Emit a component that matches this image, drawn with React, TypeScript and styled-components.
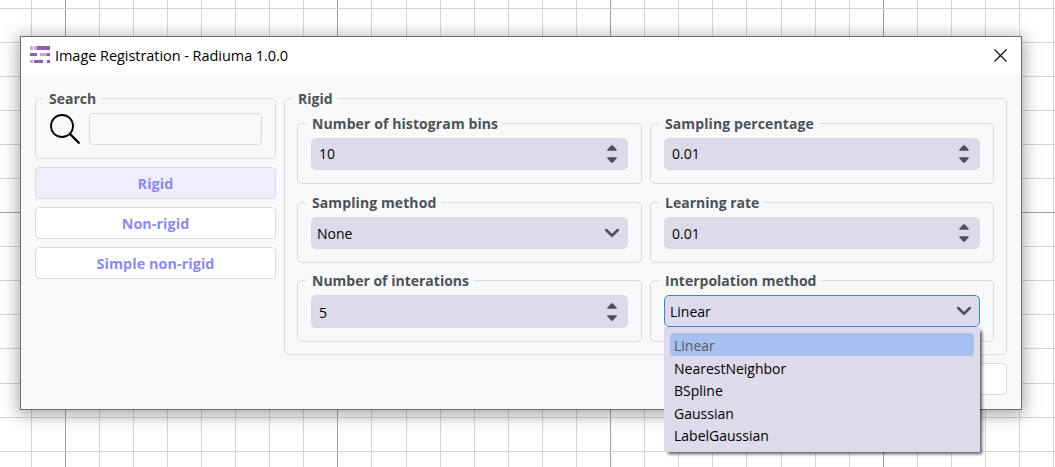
import React from "react";
import styled, { createGlobalStyle, css } from "styled-components";

const GlobalStyle = createGlobalStyle`
  *, *::before, *::after { box-sizing: border-box; }
  html, body { margin: 0; height: 100%; overflow: hidden; background: #fff; }
  body { font-family: "Open Sans", "Noto Sans", sans-serif; font-size: 14px; color: #000; }
`;

const Desktop = styled.main`
  position: relative;
  width: 1055px;
  height: 467px;
  padding: 36px 33px 57px 20px;
  overflow: hidden;
`;

const GridSvg = styled.svg`
  position: absolute;
  inset: 0;
`;

const Dialog = styled.section`
  position: relative;
  display: flex;
  flex-direction: column;
  width: 1002px;
  height: 374px;
  border: 1px solid #6b6d70;
  background: #f8f9fb;
  box-shadow: 0 3px 16px 2px rgba(0, 0, 0, 0.34);
`;

const TitleBar = styled.header`
  display: flex;
  align-items: center;
  height: 37px;
  padding: 0 14px 0 9px;
  background: #fff;
`;

const Title = styled.h1`
  flex: 1;
  margin: 0 0 0 5px;
  font-size: 14.5px;
  font-weight: 400;
  line-height: 20px;
  letter-spacing: -0.05px;
`;

const Body = styled.div`
  display: flex;
  gap: 8px;
  padding: 16px 14px 0;
`;

const Sidebar = styled.nav`
  display: flex;
  flex-direction: column;
  gap: 8px;
  width: 241px;
`;

const Main = styled.div`
  display: flex;
  flex-direction: column;
  flex: 1;
  gap: 8px;
  min-width: 0;
`;

const Group = styled.fieldset<{ $height: number; $pad?: number }>`
  min-width: 0;
  height: ${(p) => p.$height}px;
  margin: 0;
  padding: 0 ${(p) => p.$pad ?? 13}px;
  border: 1px solid #dadbde;
  border-radius: 5px;
`;

const Legend = styled.legend<{ $tracking?: number }>`
  height: 17px;
  margin-left: -5px;
  padding: 0 5px 0 6px;
  color: #4d5157;
  font-size: 14px;
  font-weight: 700;
  line-height: 17px;
  letter-spacing: ${(p) => p.$tracking ?? 0}px;
  white-space: nowrap;
`;

const SearchLegend = styled(Legend)`
  margin-left: -6px;
`;

const SearchRow = styled.div`
  display: flex;
  align-items: flex-start;
  gap: 8px;
  margin-top: 5px;
`;

const SearchInput = styled.input`
  width: 173px;
  height: 32px;
  margin: 1px 0 0;
  border: 1px solid #dadbde;
  border-radius: 4px;
  background: #f8f9fb;
  outline: none;
`;

const NavButton = styled.button<{ $active?: boolean }>`
  height: 32px;
  padding: 1px 0 0;
  border: 1px solid #dadbde;
  border-radius: 4px;
  background: ${(p) => (p.$active ? "#f0edfe" : "#fff")};
  color: #8a8af2;
  font: 700 14.4px/29px "Open Sans", "Noto Sans", sans-serif;
  letter-spacing: 0.05px;
`;

const Fields = styled.div`
  display: grid;
  grid-template-columns: 345px 344px;
  grid-template-rows: 69px 68px 70px;
  column-gap: 8px;
  row-gap: 10px;
  margin-top: 8px;
`;

const Field = styled.div<{ $open?: boolean; $height: number }>`
  display: flex;
  align-items: center;
  justify-content: space-between;
  height: ${(p) => p.$height}px;
  margin-top: 6px;
  padding: 0 8px 0 7px;
  border: 1px solid #dadbde;
  border-radius: 5px;
  background: #dcdaeb;
  ${(p) => p.$open && css`border-color: #3584ee;`}
`;

const Value = styled.span<{ $select?: boolean; $drop?: number }>`
  margin-left: ${(p) => (p.$select ? -2 : 0)}px;
  padding-top: ${(p) => p.$drop ?? 0}px;
  line-height: 20px;
`;

const Footer = styled.footer`
  display: flex;
  justify-content: flex-end;
`;

const FooterButton = styled.button`
  width: 120px;
  height: 32px;
  border: 1px solid #dadbde;
  border-radius: 4px;
  background: #fff;
`;

const Menu = styled.ul`
  position: absolute;
  left: 664px;
  top: 327px;
  width: 316px;
  height: 125px;
  margin: 0;
  padding: 6px;
  list-style: none;
  background: #dcdaeb;
  box-shadow: 3px 3px 3px -1px rgba(0, 0, 0, 0.65);
`;

const Option = styled.li<{ $selected?: boolean }>`
  height: 22.6px;
  padding-left: 4px;
  border-radius: 4px;
  line-height: 25px;
  color: ${(p) => (p.$selected ? "#55585f" : "#000")};
  background: ${(p) => (p.$selected ? "#a8c0ee" : "transparent")};
`;

const Canvas = () => {
  const pitch = 34.09;
  return (
    <GridSvg width="1055" height="467" shapeRendering="crispEdges">
      {Array.from({ length: 31 }, (_, i) => (
        <rect key={i} x={Math.round(30.55 + i * pitch)} y="0" width="1" height="467" fill={i % 8 === 1 ? "#a0a0a0" : "#d5d5d5"} />
      ))}
      {Array.from({ length: 14 }, (_, i) => (
        <rect key={i} x="0" y={Math.round(7.55 + i * pitch)} width="1055" height="1" fill={i === 6 ? "#a0a0a0" : "#d5d5d5"} />
      ))}
    </GridSvg>
  );
};

const Logo = () => (
  <svg width="20" height="19" viewBox="0 0 20 19" shapeRendering="crispEdges">
    <path fill="#c7a8d4" d="M0 0h3v4H0zM4 0h3v4H4zM10 7h7v3h-7zM0 14h3v3H0z" />
    <path fill="#955da8" d="M7 0h13v4H7zM0 7h7v3H0zM17 7h3v3h-3zM4 14h9v3H4zM17 14h3v3h-3z" />
  </svg>
);

const Close = () => (
  <svg width="13" height="13" viewBox="0 0 13 13">
    <path d="M.5.5l12 12M12.500.5l-12 12" stroke="#000" strokeWidth="1.1" />
  </svg>
);

const Magnifier = () => (
  <svg width="32" height="32" viewBox="0 0 32 32" fill="none" stroke="#000">
    <circle cx="13" cy="14" r="11" strokeWidth="1.800" />
    <path d="M21 22l9.500 9.500" strokeWidth="2.300" />
  </svg>
);

const Spinner = () => (
  <svg width="14" height="20" viewBox="0 0 14 20" fill="#4d5157">
    <path d="M2.500 6.700Q1.800 6.400 2.500 5.500L6 1.600Q7 .700 8 1.600L11.500 5.500Q12.200 6.400 11.500 6.700Z" />
    <path d="M2.500 13.300Q1.800 13.600 2.500 14.500L6 18.400Q7 19.300 8 18.400L11.500 14.500Q12.200 13.600 11.500 13.300Z" />
  </svg>
);

const Chevron = () => (
  <svg width="14" height="10" viewBox="0 0 14 10">
    <path d="M1.200 2l5.800 5.700L12.800 2" fill="none" stroke="#4d5157" strokeWidth="2.500" strokeLinecap="round" />
  </svg>
);

type FieldSpec = {
  label: string;
  value: string;
  select?: boolean;
  open?: boolean;
  tracking?: number;
  height?: number;
  drop?: number;
};

const fields: FieldSpec[] = [
  { label: "Number of histogram bins", value: "10", tracking: 0.1 },
  { label: "Sampling percentage", value: "0.01", tracking: 0.1 },
  { label: "Sampling method", value: "None", select: true, tracking: 0.1, drop: 1 },
  { label: "Learning rate", value: "0.01", drop: 1 },
  { label: "Number of interations", value: "5", height: 33, drop: 2 },
  { label: "Interpolation method", value: "Linear", select: true, open: true, drop: 2 },
];

const options = ["Linear", "NearestNeighbor", "BSpline", "Gaussian", "LabelGaussian"];

export default function App() {
  return (
    <>
      <GlobalStyle />
      <Desktop>
        <Canvas />
        <Dialog>
          <TitleBar>
            <Logo />
            <Title>Image Registration - Radiuma 1.0.0</Title>
            <Close />
          </TitleBar>
          <Body>
            <Sidebar>
              <Group $height={69}>
                <SearchLegend>Search</SearchLegend>
                <SearchRow>
                  <Magnifier />
                  <SearchInput />
                </SearchRow>
              </Group>
              <NavButton $active>Rigid</NavButton>
              <NavButton>Non-rigid</NavButton>
              <NavButton>Simple non-rigid</NavButton>
            </Sidebar>
            <Main>
              <Group $height={265} $pad={12}>
                <Legend>Rigid</Legend>
                <Fields>
                  {fields.map((f, i) => (
                    <Group key={f.label} $height={i > 3 ? 70 : 69}>
                      <Legend $tracking={f.tracking}>{f.label}</Legend>
                      <Field $open={f.open} $height={f.height ?? 32}>
                        <Value $select={f.select} $drop={f.drop}>{f.value}</Value>
                        {f.select ? <Chevron /> : <Spinner />}
                      </Field>
                    </Group>
                  ))}
                </Fields>
              </Group>
              <Footer>
                <FooterButton />
              </Footer>
            </Main>
          </Body>
        </Dialog>
        <Menu>
          {options.map((o, i) => (
            <Option key={o} $selected={i === 0}>{o}</Option>
          ))}
        </Menu>
      </Desktop>
    </>
  );
}
